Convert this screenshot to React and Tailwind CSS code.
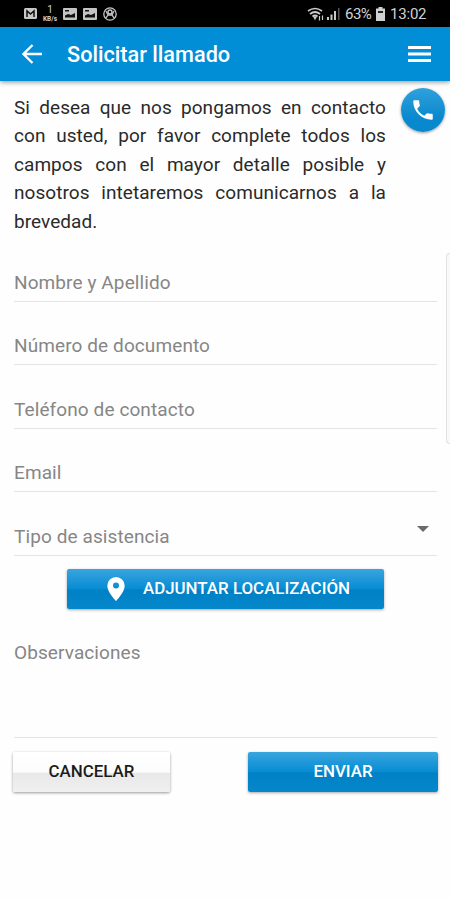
const lines = [
  'Si desea que nos pongamos en contacto',
  'con usted, por favor complete todos los',
  'campos con el mayor detalle posible y',
  'nosotros intetaremos comunicarnos a la',
];

const blueButton =
  'flex items-center justify-center rounded-[2px] bg-[linear-gradient(to_bottom,#39a5de_0%,#1b96d8_30%,#058dd3_50%,#0080c5_52%,#0588cb_100%)] text-[16.9px] font-medium text-white shadow-[0_1px_3px_rgba(0,0,0,0.35)]';

function Picture() {
  return (
    <svg width="14" height="12" viewBox="0 0 14 12">
      <rect width="14" height="12" rx="1" fill="#c4c4c4" />
      <path d="M2 9.5V7.5l3-1.500 3 1 4-2v4.500z" fill="#111" />
      <path d="M2 2h4v1.5H2z" fill="#111" />
    </svg>
  );
}

function StatusBar() {
  return (
    <div className="flex h-[27px] items-center bg-black pl-6 pr-[24px] text-[#d2d2d2]">
      <svg width="13" height="11" viewBox="0 0 13 11">
        <rect width="13" height="11" rx="1.5" fill="#c8c8c8" />
        <path d="M3 9V3l3.5 3L10 3v6" fill="none" stroke="#111" strokeWidth="1.5" />
      </svg>
      <div className="ml-[5px] flex w-4 flex-col items-center">
        <span className="text-[10px] leading-[12px]">1</span>
        <span className="text-[6.500px] font-bold leading-[7px]">KB/s</span>
      </div>
      <div className="ml-[5px] flex gap-[6px]">
        <Picture />
        <Picture />
      </div>
      <svg className="ml-[6px]" width="14" height="14" viewBox="0 0 14 14" fill="none" stroke="#c8c8c8">
        <circle cx="7" cy="7" r="6.2" strokeWidth="1.3" />
        <circle cx="7" cy="5" r="2" strokeWidth="1.4" />
        <path d="M3 11l2-3h4l2 3M3 4l2 4M11 4L9 8" strokeWidth="1.3" />
      </svg>
      <svg className="ml-auto" width="18" height="16" viewBox="0 0 18 16" fill="none" stroke="#cccccc" strokeWidth="1.7">
        <path d="M1 5Q8 0 15 5M3 8Q8 4 13 8M5.5 10.5Q8 8.5 10.5 10.5" />
        <path d="M7 11h2l-1 2zM12.5 10v4.5M15.5 14V9.5" strokeWidth="1.2" />
      </svg>
      <svg className="ml-[2px]" width="13" height="13" viewBox="0 0 13 13">
        <path d="M0 10h2v3H0zM3.5 7.5h2V13h-2zM7 4h2v9H7z" fill="#c8c8c8" />
        <path d="M11 1h1.500v12H11z" fill="#555" />
      </svg>
      <span className="ml-[5px] w-[27px] whitespace-nowrap pt-[2px] text-[15px] tracking-[-0.5px]">63%</span>
      <svg className="ml-[4px]" width="9" height="14" viewBox="0 0 9 14">
        <path d="M2.5 0h4v1.5H9V14H0V1.5h2.500z" fill="#d0d0d0" />
        <path d="M2 4h5v2H2z" fill="#222" />
      </svg>
      <span className="ml-[5px] w-[36px] whitespace-nowrap pt-[2px] text-[15px] tracking-[-0.2px]">13:02</span>
    </div>
  );
}

function Field({ label, select }) {
  return (
    <div className="flex h-[63.4px] items-end justify-between border-b border-[#e4e4e4] pb-[6px]">
      <span className="text-[19px] leading-[24px] tracking-[0.1px] text-[#868686]">{label}</span>
      {select && (
        <svg className="mb-[17px] mr-[8px]" width="12" height="6" viewBox="0 0 12 6">
          <path d="M0 0h12L6 6z" fill="#6b6b6b" />
        </svg>
      )}
    </div>
  );
}

export default function App() {
  return (
    <div className="flex h-[900px] w-[450px] flex-col overflow-hidden bg-[#fefefe] font-[Roboto,sans-serif]">
      <StatusBar />
      <header className="relative flex h-[54px] shrink-0 items-center bg-[#028dd7] pl-[22px] pr-[19px] text-white shadow-[0_1px_5px_rgba(0,0,0,0.45)]">
        <svg width="20" height="20" viewBox="0 0 20 20" fill="none" stroke="white" strokeWidth="2.3">
          <path d="M20 10H2M10.5 1L1.5 10l9 9" />
        </svg>
        <h1 className="ml-[25px] pt-[3px] text-[21.7px] font-medium">Solicitar llamado</h1>
        <svg className="ml-auto" width="23" height="16" viewBox="0 0 23 16" fill="white">
          <path d="M0 0h23v3H0zM0 6.5h23v3H0zM0 13h23v3H0z" />
        </svg>
      </header>
      <main className="flex flex-col pl-[14px] pr-[13px]">
        <div className="flex h-[157.6px] justify-between pt-[13px]">
          <p className="w-[372px] text-[19px] leading-[28.4px] tracking-[0.05px] text-[#2a2a2a]">
            {lines.map((line) => (
              <span key={line} className="flex justify-between">
                {line.split(' ').map((word) => (
                  <span key={word}>{word}</span>
                ))}
              </span>
            ))}
            <span className="block">brevedad.</span>
          </p>
          <button className="-mr-[8px] -mt-[6px] flex size-11 shrink-0 items-center justify-center rounded-full bg-[linear-gradient(to_bottom,#30a1dc,#0888ce_70%)] shadow-[0_1px_3px_rgba(0,0,0,0.4)]">
            <svg width="26" height="26" viewBox="0 0 24 24" fill="white">
              <path d="M6.62 10.79c1.44 2.83 3.76 5.14 6.59 6.59l2.2-2.2c.27-.27.67-.36 1.02-.24 1.12.37 2.33.57 3.57.57.55 0 1 .45 1 1V20c0 .55-.45 1-1 1-9.39 0-17-7.61-17-17 0-.55.45-1 1-1h3.5c.55 0 1 .45 1 1 0 1.25.2 2.45.57 3.57.11.35.03.74-.25 1.02z" />
            </svg>
          </button>
        </div>
        <Field label="Nombre y Apellido" />
        <Field label="Número de documento" />
        <Field label="Teléfono de contacto" />
        <Field label="Email" />
        <Field label="Tipo de asistencia" select />
        <button className={`${blueButton} ml-[53px] mt-[13.4px] h-10 w-[317px] pl-[6px]`}>
          <svg width="18" height="24" viewBox="0 0 18 24" fill="white">
            <path fillRule="evenodd" d="M9 0a8.7 8.7 0 0 0-8.7 8.7C.3 15.2 9 24 9 24s8.7-8.8 8.7-15.3A8.7 8.7 0 0 0 9 0zm0 5.6a3 3 0 1 1 0 6 3 3 0 0 1 0-6z" />
          </svg>
          <span className="ml-[18px]">ADJUNTAR LOCALIZACIÓN</span>
        </button>
        <div className="h-[129.5px] border-b border-[#e4e4e4] pt-[32px] text-[19px] leading-[24px] tracking-[0.1px] text-[#868686]">
          Observaciones
        </div>
        <div className="-mr-px mt-[13.5px] flex justify-between">
          <button className="-ml-px h-10 w-[157px] rounded-[2px] bg-[linear-gradient(to_bottom,#ffffff_0%,#fcfcfc_50%,#e8e8e8_54%,#f0f0f0_100%)] text-[16.9px] font-medium text-[#1c1c1c] shadow-[0_1px_3px_rgba(0,0,0,0.4)]">
            CANCELAR
          </button>
          <button className={`${blueButton} h-10 w-[190px]`}>ENVIAR</button>
        </div>
      </main>
      <div className="absolute left-[446px] top-[253px] h-[191px] w-[4px] rounded-l-[5px] border border-r-0 border-[#e2e2e2] bg-[#f9f9f9]" />
    </div>
  );
}
